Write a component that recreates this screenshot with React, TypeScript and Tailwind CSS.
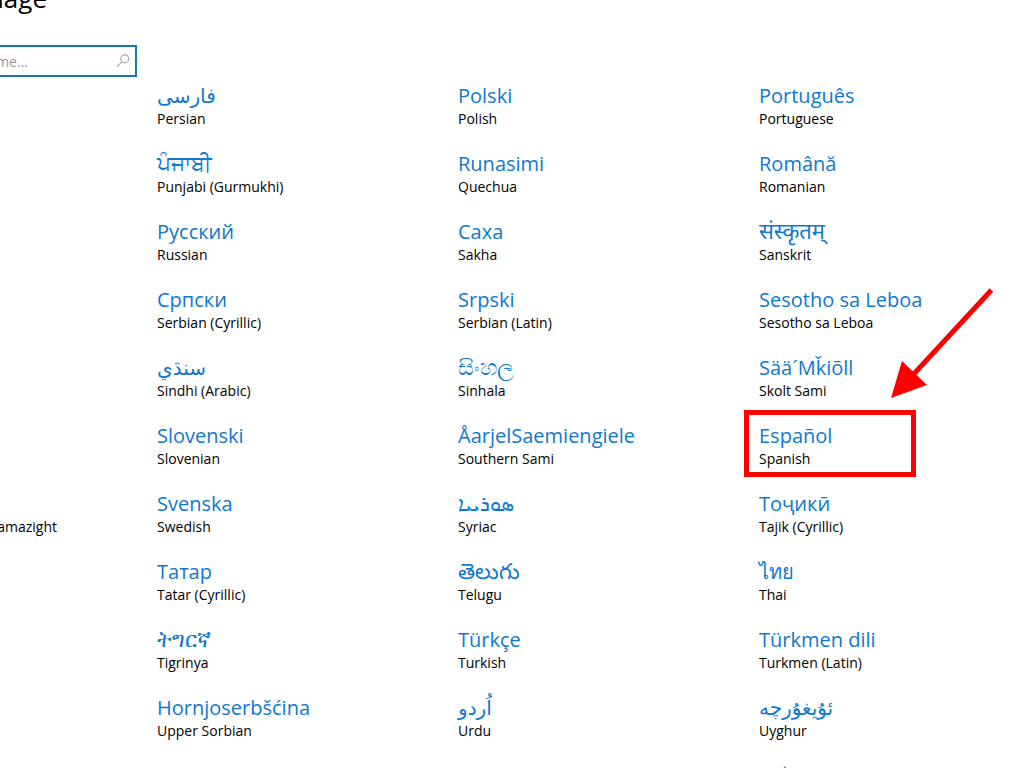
interface Language {
  native: string;
  english: string;
  lang: string;
  rtl?: boolean;
  large?: boolean;
  highlighted?: boolean;
}

const languages: Language[] = [
  { native: "فارسی", english: "Persian", lang: "fa", rtl: true },
  { native: "Polski", english: "Polish", lang: "pl" },
  { native: "Português", english: "Portuguese", lang: "pt" },
  { native: "ਪੰਜਾਬੀ", english: "Punjabi (Gurmukhi)", lang: "pa", large: true },
  { native: "Runasimi", english: "Quechua", lang: "qu" },
  { native: "Română", english: "Romanian", lang: "ro" },
  { native: "Русский", english: "Russian", lang: "ru" },
  { native: "Саха", english: "Sakha", lang: "sah" },
  { native: "संस्कृतम्", english: "Sanskrit", lang: "sa", large: true },
  { native: "Српски", english: "Serbian (Cyrillic)", lang: "sr-Cyrl" },
  { native: "Srpski", english: "Serbian (Latin)", lang: "sr-Latn" },
  { native: "Sesotho sa Leboa", english: "Sesotho sa Leboa", lang: "nso" },
  { native: "سنڌي", english: "Sindhi (Arabic)", lang: "sd", rtl: true },
  { native: "සිංහල", english: "Sinhala", lang: "si", large: true },
  { native: "Sää´Mǩiõll", english: "Skolt Sami", lang: "sms" },
  { native: "Slovenski", english: "Slovenian", lang: "sl" },
  { native: "ÅarjelSaemiengiele", english: "Southern Sami", lang: "sma" },
  { native: "Español", english: "Spanish", lang: "es", highlighted: true },
  { native: "Svenska", english: "Swedish", lang: "sv" },
  { native: "ܣܘܪܝܝܐ", english: "Syriac", lang: "syr", rtl: true },
  { native: "Тоҷикӣ", english: "Tajik (Cyrillic)", lang: "tg" },
  { native: "Татар", english: "Tatar (Cyrillic)", lang: "tt" },
  { native: "తెలుగు", english: "Telugu", lang: "te", large: true },
  { native: "ไทย", english: "Thai", lang: "th" },
  { native: "ትግርኛ", english: "Tigrinya", lang: "ti", large: true },
  { native: "Türkçe", english: "Turkish", lang: "tr" },
  { native: "Türkmen dili", english: "Turkmen (Latin)", lang: "tk" },
  { native: "Hornjoserbšćina", english: "Upper Sorbian", lang: "hsb" },
  { native: "اُردو", english: "Urdu", lang: "ur", rtl: true },
  { native: "ئۇيغۇرچە", english: "Uyghur", lang: "ug", rtl: true },
  { native: "O‘zbekcha", english: "Uzbek (Latin)", lang: "uz" },
  { native: "Valencià", english: "Valencian", lang: "ca" },
  { native: "Tiếng Việt", english: "Vietnamese", lang: "vi" },
];

const SearchIcon = () => (
  <svg
    className="h-4 w-4 shrink-0"
    viewBox="0 0 16 16"
    fill="none"
    stroke="#a3a3a3"
    strokeWidth="1.1"
    aria-hidden="true"
  >
    <circle cx="9.7" cy="5.9" r="4" />
    <path d="M6.9 8.8 2 13.6" />
  </svg>
);

// red pointer that leads to the highlighted language
const Arrow = () => (
  <svg
    className="pointer-events-none absolute bottom-full left-[132px] mb-[26px] h-[111px] w-[105px]"
    viewBox="0 0 105 111"
    aria-hidden="true"
  >
    <path d="M100.500 3 20 90" stroke="#fe0000" strokeWidth="5" />
    <path d="M0 111 11 74 36 98Z" fill="#fe0000" />
  </svg>
);

const LanguageItem = ({ item }: { item: Language }) => (
  <li className="relative">
    <button type="button" className="block cursor-pointer text-left whitespace-nowrap">
      {/* scripts with small glyphs get a larger size */}
      <span
        className={
          item.large
            ? "block h-6 text-[22px] leading-5 text-[#0f78d0]"
            : "block h-6 text-[20px] leading-6 text-[#0f78d0]"
        }
        lang={item.lang}
      >
        <bdi dir={item.rtl ? "rtl" : "ltr"}>{item.native}</bdi>
      </span>
      <span className="block text-[14px] leading-[22px]">{item.english}</span>
    </button>
    {item.highlighted && (
      <>
        <div className="pointer-events-none absolute -top-[14px] -left-[15px] h-[67px] w-[172px] border-5 border-[#fe0000]" />
        <Arrow />
      </>
    )}
  </li>
);

const App = () => {
  return (
    <main className="flex h-screen overflow-hidden bg-white font-['Open_Sans','Noto_Sans','DejaVu_Sans',sans-serif] text-black">
      {/* the first column is scrolled partly out of view */}
      <div className="flex w-[157px] shrink-0 flex-col items-end pr-5">
        <h1 className="mr-[90px] -mt-5 h-[65px] text-[26px] leading-[36px] whitespace-nowrap">
          Add a language
        </h1>
        <label className="flex h-8 w-[281px] shrink-0 items-center border-2 border-[#1a73b5] pr-1">
          <input
            type="text"
            aria-label="Type a language name"
            placeholder="Type a language name..."
            className="mr-[87px] min-w-0 flex-1 text-right text-[14px] outline-none placeholder:text-[#999999]"
          />
          <SearchIcon />
        </label>
        <button
          type="button"
          className="mt-[439px] mr-20 cursor-pointer text-[14px] leading-[22px] whitespace-nowrap"
        >
          Standard Moroccan Tamazight
        </button>
      </div>

      <ul className="grid flex-1 auto-rows-max grid-cols-[301px_301px_1fr] gap-y-[22px] pt-[84px]">
        {languages.map((item) => (
          <LanguageItem item={item} key={item.lang} />
        ))}
      </ul>
    </main>
  );
};

export default App;
